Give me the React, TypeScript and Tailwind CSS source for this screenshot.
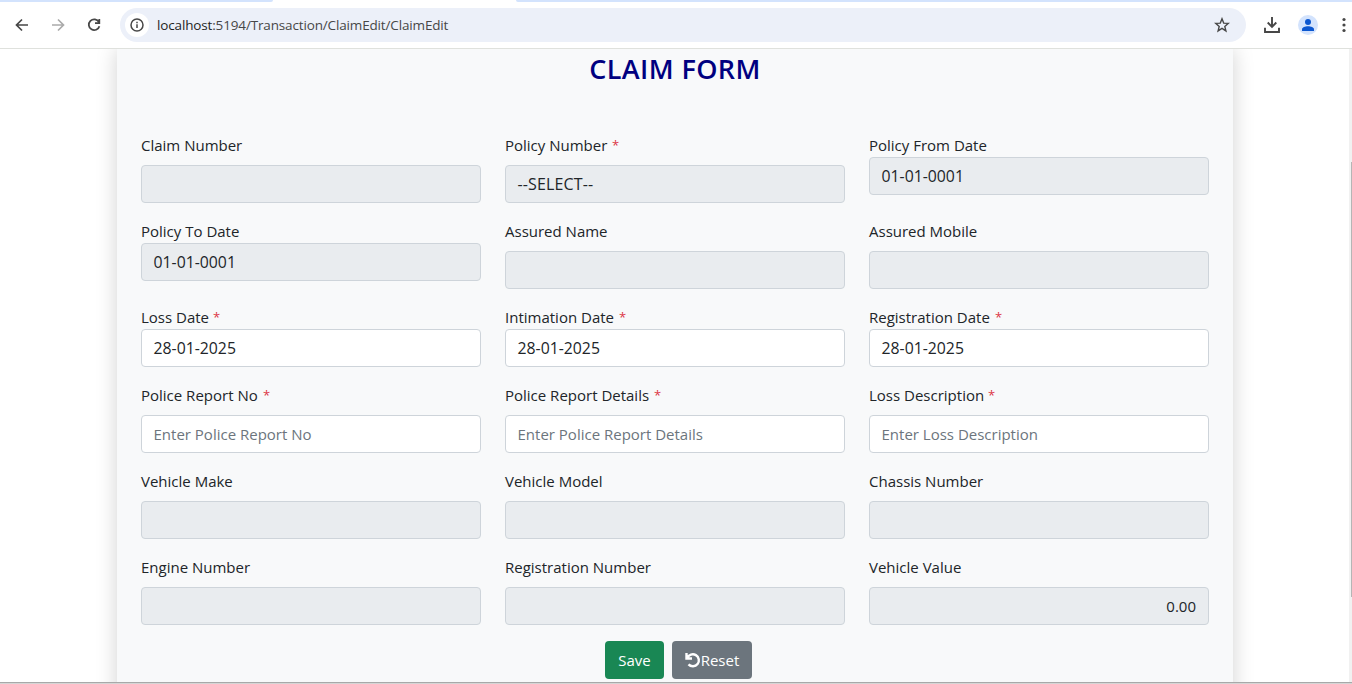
import React from "react";

type Field = {
  label: string;
  value?: string;
  placeholder?: string;
  required?: boolean;
  readOnly?: boolean;
  tight?: boolean;
  right?: boolean;
  labelWidth: number;
};

const rows: Field[][] = [
  [
    { label: "Claim Number", readOnly: true, labelWidth: 102 },
    { label: "Policy Number", required: true, readOnly: true, value: "--SELECT--", labelWidth: 103 },
    { label: "Policy From Date", readOnly: true, tight: true, value: "01-01-0001", labelWidth: 119 },
  ],
  [
    { label: "Policy To Date", readOnly: true, tight: true, value: "01-01-0001", labelWidth: 99 },
    { label: "Assured Name", readOnly: true, labelWidth: 103 },
    { label: "Assured Mobile", readOnly: true, labelWidth: 110 },
  ],
  [
    { label: "Loss Date", required: true, tight: true, value: "28-01-2025", labelWidth: 68 },
    { label: "Intimation Date", required: true, tight: true, value: "28-01-2025", labelWidth: 110 },
    { label: "Registration Date", required: true, tight: true, value: "28-01-2025", labelWidth: 122 },
  ],
  [
    { label: "Police Report No", required: true, placeholder: "Enter Police Report No", labelWidth: 118 },
    { label: "Police Report Details", required: true, placeholder: "Enter Police Report Details", labelWidth: 145 },
    { label: "Loss Description", required: true, placeholder: "Enter Loss Description", labelWidth: 115 },
  ],
  [
    { label: "Vehicle Make", readOnly: true, labelWidth: 93 },
    { label: "Vehicle Model", readOnly: true, labelWidth: 100 },
    { label: "Chassis Number", readOnly: true, labelWidth: 114 },
  ],
  [
    { label: "Engine Number", readOnly: true, labelWidth: 110 },
    { label: "Registration Number", readOnly: true, labelWidth: 147 },
    { label: "Vehicle Value", readOnly: true, right: true, value: "0.00", labelWidth: 92 },
  ],
];

function FormField({ field }: { field: Field }) {
  const wide = field.value !== undefined && !field.right;
  return (
    <div>
      <label className={`flex h-6 items-center gap-1 whitespace-nowrap ${field.tight ? "" : "mb-2"}`}>
        <span style={{ width: field.labelWidth }}>{field.label}</span>
        {field.required && <span className="text-[13px] leading-6 text-[#dc3545]">*</span>}
      </label>
      <div
        className={`flex h-[38px] items-center rounded border border-[#ced4da] pl-[11.5px] pr-3 ${
          field.readOnly ? "bg-[#e9ecef]" : "bg-white"
        } ${field.right ? "justify-end" : ""} ${field.placeholder ? "text-[#6c757d]" : ""} ${
          wide ? (field.value === "--SELECT--" ? "text-[16px] tracking-[0.15px]" : "text-[15.8px]") : ""
        }`}
      >
        {field.value ?? field.placeholder}
      </div>
    </div>
  );
}

function BrowserBar() {
  return (
    <header className="flex h-[49px] shrink-0 flex-col border-b border-[#dfe1dd] bg-white">
      <div className="flex h-0.5 shrink-0 justify-between">
        <div className="w-[273px] rounded-br-[2px] bg-[#d3e3fd]" />
        <div className="w-[836px] rounded-bl-[2px] bg-[#d3e3fd]" />
      </div>
      <div className="flex h-[46px] items-center">
        <svg className="ml-3.5 size-4" viewBox="0 0 16 16" fill="none" stroke="#474747" strokeWidth="1.7">
          <path d="M14 8H3M8 2.5 2.5 8 8 13.5" />
        </svg>
        <svg className="ml-5 size-4" viewBox="0 0 16 16" fill="none" stroke="#aaaaaa" strokeWidth="1.7">
          <path d="M2 8h11M8 2.5 13.5 8 8 13.5" />
        </svg>
        <svg className="ml-5 size-4" viewBox="0 0 16 16" fill="none" stroke="#474747" strokeWidth="1.8">
          <path d="M12.9 5A5.4 5.4 0 1 0 13.4 9.2M13.3 2v4.2H9" />
        </svg>
        <div className="ml-[18px] flex h-[34px] w-[1126px] items-center rounded-full bg-[#ecf0f9] pl-[5px] pr-4">
          <div className="flex size-6 items-center justify-center rounded-full bg-white">
            <svg className="size-4" viewBox="0 0 16 16" fill="none" stroke="#474747" strokeWidth="1.5">
              <circle cx="8" cy="8" r="6" />
              <path d="M8 7.2v3.8M8 4.8v1.4" />
            </svg>
          </div>
          <span className="ml-2 text-[13.5px] tracking-[-0.15px] text-[#474747]">
            <span className="text-[#1f1f1f]">localhost</span>:5194/Transaction/ClaimEdit/ClaimEdit
          </span>
          <svg className="ml-auto size-4" viewBox="0 0 16 16" fill="none" stroke="#474747" strokeWidth="1.4">
            <path d="m8 1.8 1.7 4.3 4.6.3-3.5 3 1.1 4.5L8 11.4l-3.9 2.5 1.1-4.5-3.5-3 4.6-.3Z" />
          </svg>
        </div>
        <svg className="ml-[17px] size-[18px]" viewBox="0 0 18 18" fill="none" stroke="#474747" strokeWidth="1.9">
          <path d="M9 1v9.5M4.7 6.5 9 10.8l4.3-4.3M2 11.7V16h14v-4.3" />
        </svg>
        <svg className="ml-[17px] size-5" viewBox="0 0 20 20">
          <circle cx="10" cy="10" r="10" fill="#d3e3fd" />
          <circle cx="10" cy="7.1" r="3" fill="#0b57d0" />
          <path d="M4 16v-1.8c0-2 3.2-3 6-3s6 1 6 3V16Z" fill="#0b57d0" />
        </svg>
        <svg className="ml-6 h-4 w-1" viewBox="0 0 4 16" fill="#474747">
          <circle cx="2" cy="2.5" r="1.6" />
          <circle cx="2" cy="8" r="1.6" />
          <circle cx="2" cy="13.5" r="1.6" />
        </svg>
      </div>
    </header>
  );
}

export default function App() {
  return (
    <div className="flex h-[684px] w-[1352px] flex-col overflow-hidden bg-white font-['Open_Sans','Noto_Sans',sans-serif] text-[15px] leading-6 text-[#212529]">
      <BrowserBar />
      <div className="flex h-[633px] shrink-0 overflow-hidden">
        <main className="ml-[117px] h-[660px] w-[1116px] shrink-0 bg-[#f8f9fa] px-6 shadow-[0_0_20px_rgba(0,0,0,0.18)]">
          <h1 className="flex h-[84px] justify-center pt-0.5 text-[27px] font-semibold leading-9 tracking-[0.38px] text-[#000080]">
            CLAIM FORM
          </h1>
          <form className="flex flex-col gap-4">
            {rows.map((row, i) => (
              <div className="grid grid-cols-3 items-start gap-6" key={i}>
                {row.map((field) => (
                  <FormField field={field} key={field.label} />
                ))}
              </div>
            ))}
            <div className="flex justify-center gap-2 pl-[7px] text-white">
              <button type="button" className="h-[38px] w-[59px] rounded bg-[#198754]">
                Save
              </button>
              <button type="button" className="flex h-[38px] w-20 items-center justify-center rounded bg-[#6c757d]">
                <svg className="size-4" viewBox="0 0 16 16" fill="none" stroke="white" strokeWidth="2.4">
                  <path d="M1.5 1v5.5H7M2.3 6A6 6 0 1 1 3.5 12.4" />
                </svg>
                Reset
              </button>
            </div>
          </form>
        </main>
        <div className="ml-auto flex h-full w-[3px] justify-end bg-[#f1f1f1] pt-[113px]">
          <div className="h-[435px] w-px bg-[#b5b5b5]" />
        </div>
      </div>
      <div className="h-0.5 shrink-0 border-t border-[#a8a8a8] bg-[#d5d5d5]" />
    </div>
  );
}
